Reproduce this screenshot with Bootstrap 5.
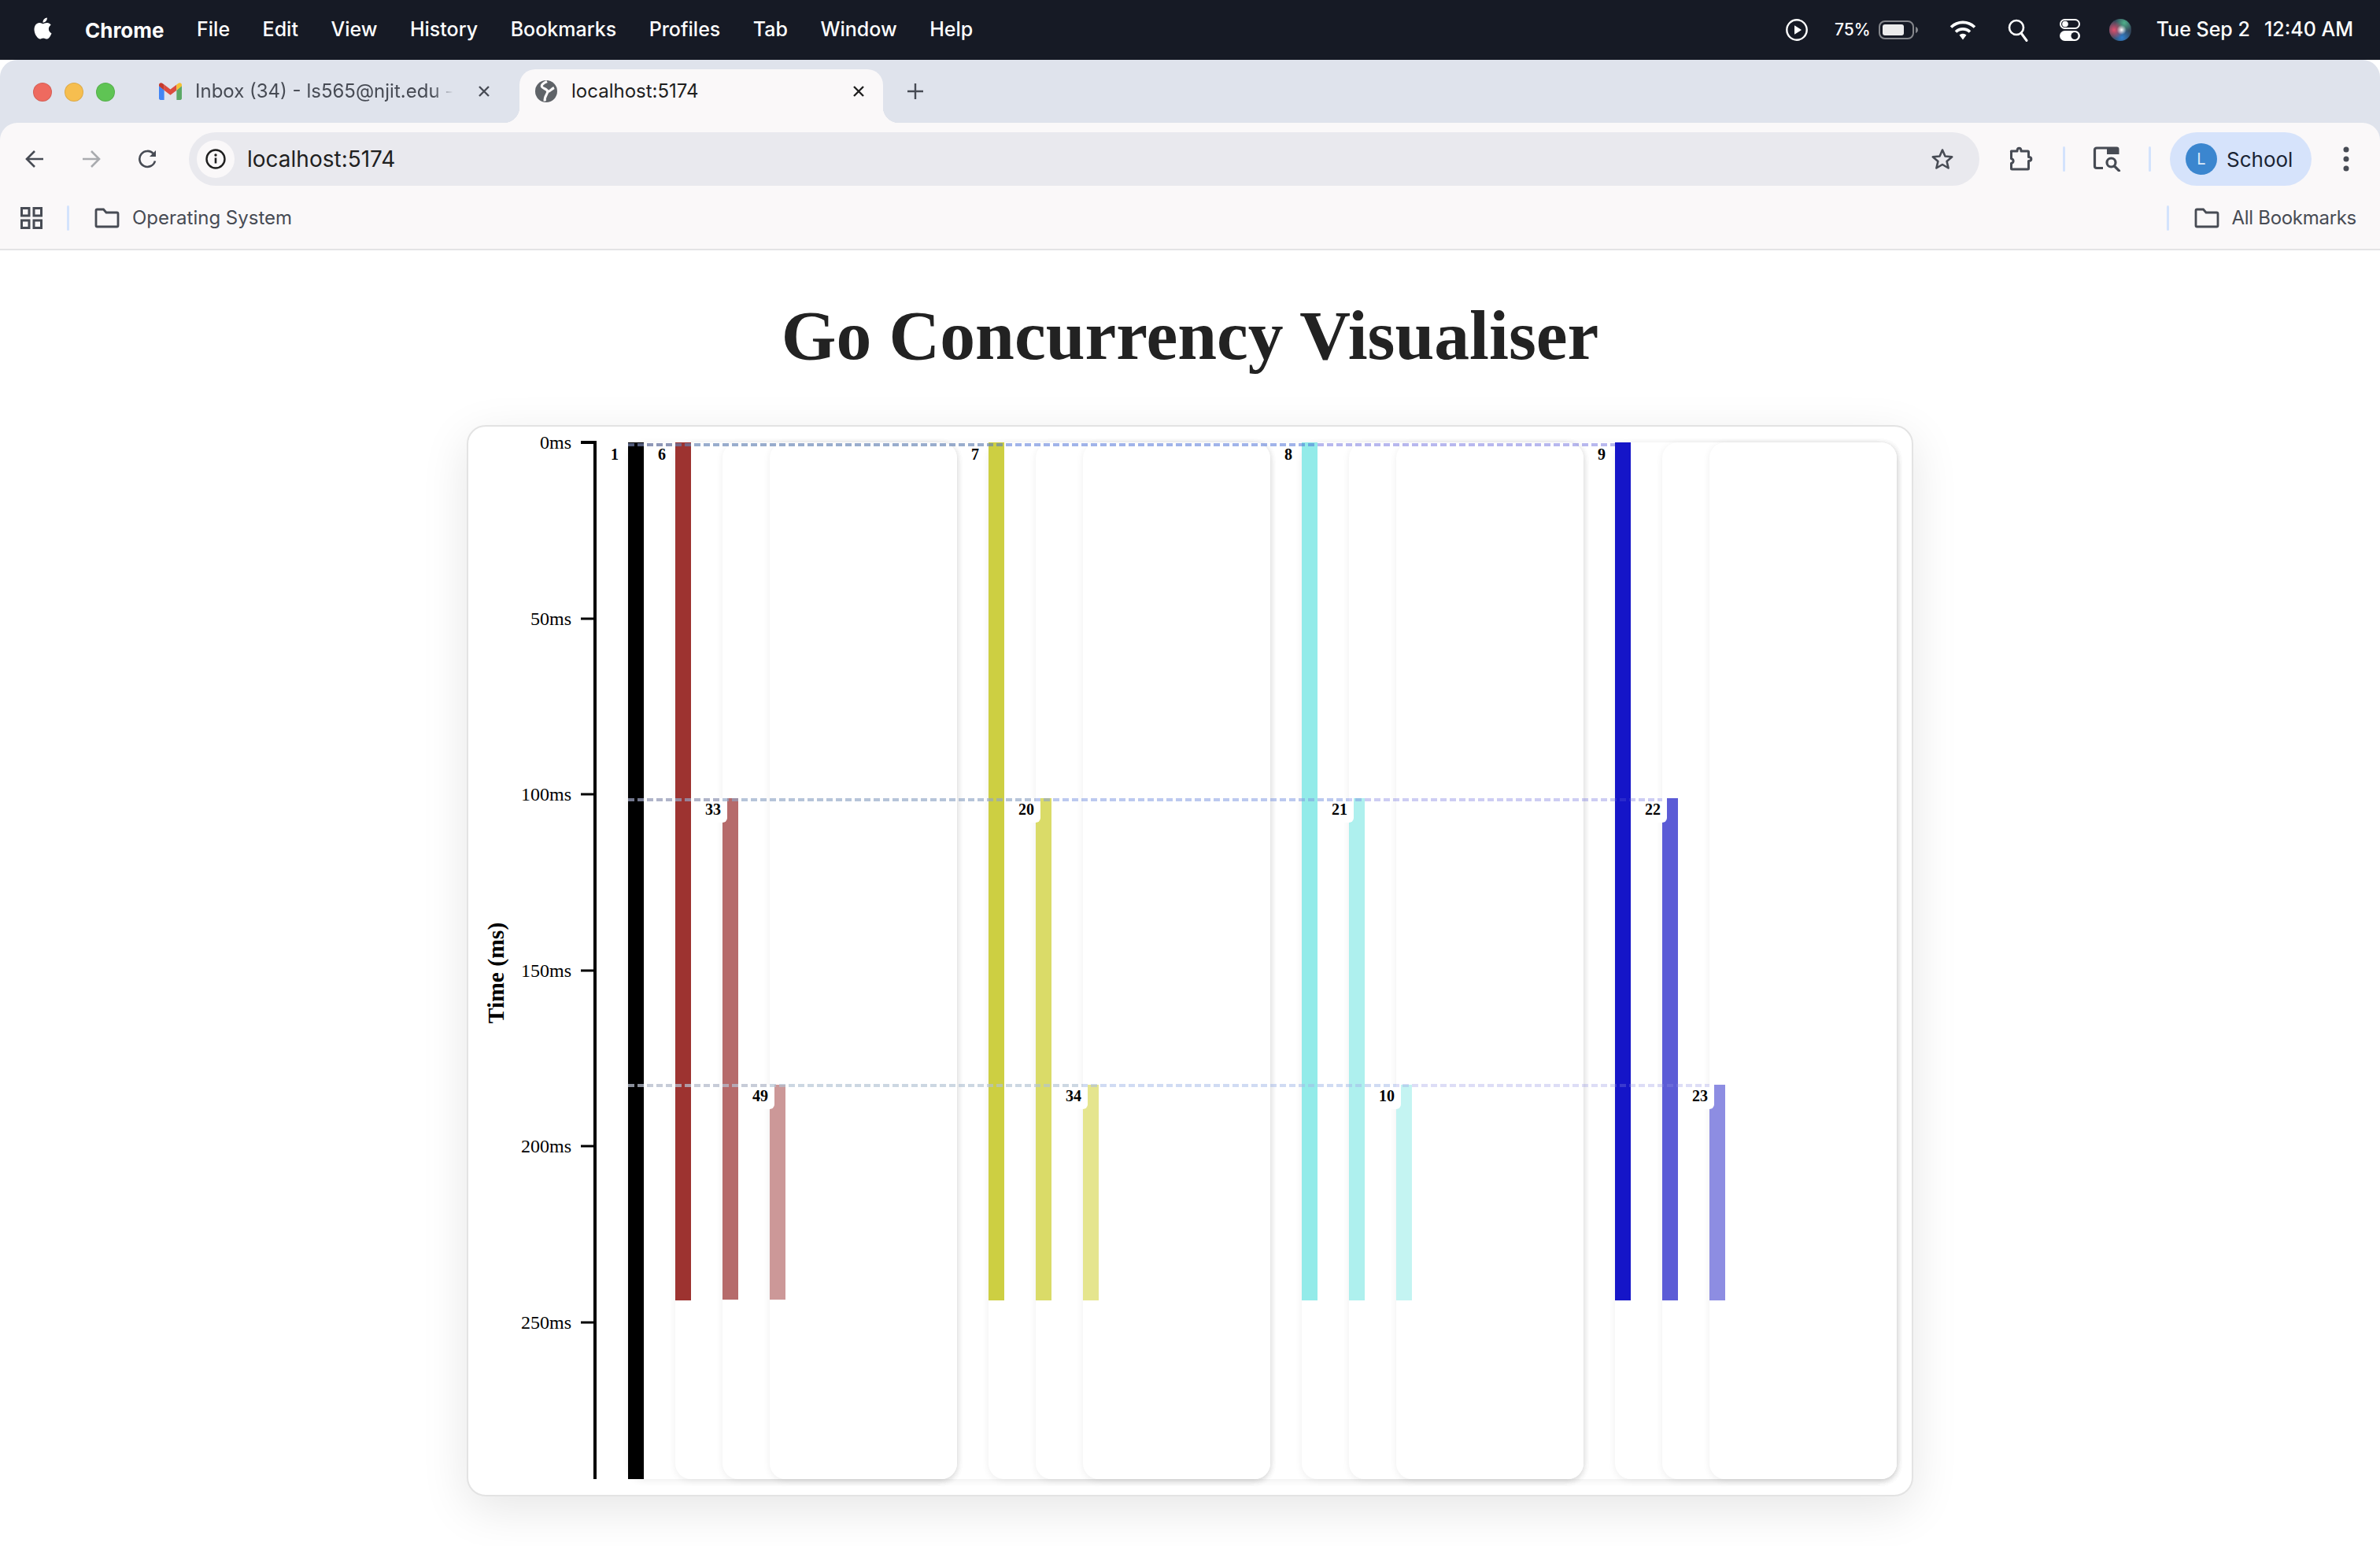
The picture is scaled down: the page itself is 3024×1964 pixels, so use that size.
<!DOCTYPE html>
<html lang="en">
  <head>
    <meta charset="utf-8" />
    <meta name="viewport" content="width=device-width, initial-scale=1" />
    <title>Go Concurrency Visualiser</title>
    <link href="https://cdn.jsdelivr.net/npm/bootstrap@5.3.0/dist/css/bootstrap.min.css" rel="stylesheet" />
    <style>
      body { background: #fff; min-height: 100vh; font-family: "Inter", "Liberation Sans", sans-serif; }

      /* mac menu bar */
      .menubar { height: 76px; background: #161a25; color: #fff; font-size: 25px; padding: 0 34px 0 41px; }
      .menu-left { gap: 41.5px; }
      .menu-apple { width: 27px; height: 32px; margin-top: -4px; fill: #fff; }
      .menu-app { font-weight: 700; font-size: 26px; margin-left: 40px; }
      .menu-item { font-weight: 500; }
      .menu-pct { font-size: 21px; font-weight: 500; margin-left: 34px; }
      .menu-batt { margin-left: 10px; }
      .menu-wifi { margin-left: 40px; }
      .menu-search { margin-left: 40px; }
      .menu-ctrl { margin-left: 40px; }
      .menu-siri { margin-left: 37px; }
      .menu-date { font-weight: 500; margin-left: 32px; }
      .menu-time { font-weight: 500; margin-left: 18px; }

      /* browser chrome */
      .tabstrip { height: 80px; background: #dfe3ec; border-radius: 22px 22px 0 0; padding: 12px 0 0 42px; }
      .light { width: 24px; height: 24px; border-radius: 50%; margin-top: 17px; margin-right: 16px; border: 1px solid rgba(0,0,0,.1); }
      .light-r { background: #ee6a5f; }
      .light-y { background: #f6be4f; }
      .light-g { background: #5fc454; margin-right: 56px; }
      .tab-off { width: 458px; height: 68px; font-size: 24px; color: #474b54; padding: 0 36px 12px 0; }
      .tab-off-text { width: 328px; margin-left: 17px; white-space: nowrap; -webkit-mask-image: linear-gradient(90deg, #000 92%, transparent); mask-image: linear-gradient(90deg, #000 92%, transparent); }
      .tab-on { width: 462px; height: 68px; background: #faf8f9; border-radius: 20px 20px 0 0; font-size: 24px; color: #1f1f1f; padding: 0 22px 12px 20px; position: relative; }
      .tab-on::before, .tab-on::after { content: ""; position: absolute; bottom: 0; width: 20px; height: 20px; background: radial-gradient(circle at 0 0, transparent 20px, #faf8f9 20.5px); }
      .tab-on::before { left: -20px; }
      .tab-on::after { right: -20px; background: radial-gradient(circle at 100% 0, transparent 20px, #faf8f9 20.5px); }
      .tab-label { margin-left: 18px; }
      .tab-new { margin-left: 30px; margin-bottom: 12px; }

      .toolbar { height: 82px; background: #faf8f9; border-radius: 22px 22px 0 0; padding: 10px 0 0 32px; }
      .tabstrip-wrap { background: #dfe3ec; }
      .tool-nav { gap: 48px; }
      .addressbar { width: 2275px; height: 68px; border-radius: 34px; background: #e9e9ee; margin-left: 40px; padding: 0 31px 0 10px; font-size: 28px; color: #1f1f1f; }
      .addr-chip { width: 48px; height: 48px; border-radius: 50%; background: #faf8f9; margin-right: 16px; }
      .tool-ext { margin-left: 37px; }
      .tool-sep { width: 3px; height: 32px; background: #d3e3fd; border-radius: 2px; }
      .tool-sep-a { margin-left: 37px; }
      .tool-search { margin-left: 35px; }
      .tool-sep-b { margin-left: 35px; }
      .profile-pill { width: 180px; height: 68px; border-radius: 34px; background: #d6e3fb; margin-left: 24px; padding-left: 20px; font-size: 26px; color: #1a2333; gap: 12px; }
      .profile-dot { width: 40px; height: 40px; border-radius: 50%; background: #3b86cf; color: #dcebfa; font-size: 20px; }
      .tool-dots { margin-left: 40px; }

      .bookmarks { height: 80px; background: #faf8f9; border-bottom: 2px solid #e3e3e5; padding: 0 30px 0 26px; font-size: 24px; color: #474b54; }
      .book-sep { width: 3px; height: 32px; background: #d3e3fd; border-radius: 2px; margin-left: 31px; margin-right: 32px; }
      .book-sep-right { margin-left: auto; margin-right: 32px; height: 32px; }
      .book-folder { margin-right: 16px; }
      .book-all { letter-spacing: -.3px; }

      /* page */
      .page-title { font-family: "Liberation Serif", serif; font-weight: 700; font-size: 89.6px; line-height: 88px; color: #222; margin: 64px 0 70px; }
      .chart-card { width: 1838px; padding: 20px; border: 2px solid #e3e3e3; border-radius: 24px; box-shadow: 0 16px 60px rgba(0,0,0,.1); }
      .axis-col { flex: none; width: 183px; height: 1317px; overflow: visible; font-family: "Liberation Serif", serif; }
      .axis-tick { font-size: 24px; }
      .axis-title { font-size: 29.6px; font-weight: 700; }

      /* goroutine lanes, nested the way the app spawns them */
      .lane { display: flex; gap: 40px; position: relative; height: 1317px; background: #fff; border-radius: 20px; box-shadow: 0 2px 10px rgba(0,0,0,.07); font-family: "Liberation Serif", serif; }
      .lane-root { flex: none; width: 1612px; }
      .lane-group { flex: 0 0 358px; }
      .lane-child { flex: 1 1 0; }
      .gbar { flex: none; width: 20px; align-self: flex-start; position: relative; }
      .gtag { position: absolute; left: -22px; top: 0; width: 28px; height: 31px; line-height: 30px; font-size: 20px; font-weight: 700; color: #000; }
      .gtag-late { background: #fff; border-radius: 0 0 6px 0; line-height: 29px; }
      .dash-layer { position: absolute; left: 0; top: 0; width: 1612px; height: 1317px; pointer-events: none; z-index: 2; }
      .dash-layer line { stroke-width: 4; stroke-dasharray: 8 4; stroke-opacity: .3; }

      .c-black { background: #000; }
      .c-red-1 { background: #9d3330; } .c-red-2 { background: #b66b6b; } .c-red-3 { background: #cc9898; }
      .c-yel-1 { background: #cdcf42; } .c-yel-2 { background: #dadb68; } .c-yel-3 { background: #e5e58e; }
      .c-cya-1 { background: #93ebe9; } .c-cya-2 { background: #aef0ee; } .c-cya-3 { background: #c4f4f2; }
      .c-blu-1 { background: #1515c8; } .c-blu-2 { background: #5b5bd6; } .c-blu-3 { background: #8d8de2; }
    </style>
  </head>
  <body>
    <!-- Menu bar -->
    <div class="menubar d-flex align-items-center">
      <div class="menu-left d-flex align-items-center">
        <div class="d-flex align-items-center">
          <svg class="menu-apple" viewBox="0 0 24 24"><path d="M12.152 6.896c-.948 0-2.415-1.078-3.96-1.04-2.04.027-3.91 1.183-4.961 3.014-2.117 3.675-.546 9.103 1.519 12.09 1.013 1.454 2.208 3.09 3.792 3.039 1.52-.065 2.09-.987 3.935-.987 1.831 0 2.35.987 3.96.948 1.637-.026 2.676-1.48 3.676-2.948 1.156-1.688 1.636-3.325 1.662-3.415-.039-.013-3.182-1.221-3.22-4.857-.026-3.04 2.48-4.494 2.597-4.559-1.429-2.09-3.623-2.324-4.39-2.376-2-.156-3.675 1.09-4.61 1.09zM15.53 3.83c.843-1.012 1.4-2.427 1.245-3.83-1.207.052-2.662.805-3.532 1.818-.78.896-1.454 2.338-1.273 3.714 1.338.104 2.715-.688 3.559-1.701"/></svg>
          <span class="menu-app">Chrome</span>
        </div>
        <span class="menu-item">File</span>
        <span class="menu-item">Edit</span>
        <span class="menu-item">View</span>
        <span class="menu-item">History</span>
        <span class="menu-item">Bookmarks</span>
        <span class="menu-item">Profiles</span>
        <span class="menu-item">Tab</span>
        <span class="menu-item">Window</span>
        <span class="menu-item">Help</span>
      </div>
      <div class="ms-auto d-flex align-items-center">
        <svg width="28" height="28" viewBox="0 0 28 28"><circle cx="14" cy="14" r="12.7" fill="none" stroke="#fff" stroke-width="2.4"/><path d="M11 8.2v11.6l9-5.8z" fill="#fff"/></svg>
        <span class="menu-pct">75%</span>
        <svg class="menu-batt" width="50" height="24" viewBox="0 0 50 24"><rect x="1" y="1" width="43" height="22" rx="7" fill="none" stroke="#85878c" stroke-width="2"/><rect x="5" y="5" width="27" height="14" rx="3" fill="#ececec"/><path d="M47 8c1.6.6 3 2 3 4s-1.4 3.4-3 4z" fill="#85878c"/></svg>
        <svg class="menu-wifi" width="34" height="26" viewBox="0 0 34 26"><g fill="none" stroke="#fff" stroke-width="3.6"><path d="M2 9.5a21.500 21.500 0 0 1 30 0"/><path d="M8 15.500a13 13 0 0 1 18 0"/></g><path d="M12.500 19.500a6.500 6.500 0 0 1 9 0L17 25.500z" fill="#fff"/></svg>
        <svg class="menu-search" width="26" height="29" viewBox="0 0 26 29"><circle cx="11" cy="11" r="9" fill="none" stroke="#fff" stroke-width="2.600"/><path d="M17 18l7 9.500" stroke="#fff" stroke-width="3" stroke-linecap="round"/></svg>
        <svg class="menu-ctrl" width="26" height="28" viewBox="0 0 26 28"><rect x="1" y="1" width="24" height="11" rx="5.500" fill="none" stroke="#fff" stroke-width="2"/><circle cx="7" cy="6.500" r="3.800" fill="#fff"/><rect y="15" width="26" height="13" rx="6.500" fill="#fff"/><circle cx="19" cy="21.500" r="4.500" fill="#161a25"/></svg>
        <svg class="menu-siri" width="28" height="28" viewBox="0 0 28 28">
          <defs>
            <radialGradient id="siriPink" cx="22%" cy="50%" r="42%"><stop offset="0" stop-color="#e0506f"/><stop offset="1" stop-color="#e0506f" stop-opacity="0"/></radialGradient>
            <radialGradient id="siriGreen" cx="68%" cy="18%" r="42%"><stop offset="0" stop-color="#4fb08a"/><stop offset="1" stop-color="#4fb08a" stop-opacity="0"/></radialGradient>
            <radialGradient id="siriBlue" cx="58%" cy="85%" r="45%"><stop offset="0" stop-color="#2f7fd0"/><stop offset="1" stop-color="#2f7fd0" stop-opacity="0"/></radialGradient>
            <radialGradient id="siriCore" cx="56%" cy="50%" r="22%"><stop offset="0" stop-color="#fff"/><stop offset="1" stop-color="#fff" stop-opacity="0"/></radialGradient>
          </defs>
          <circle cx="14" cy="14" r="14" fill="#33475a"/>
          <circle cx="14" cy="14" r="14" fill="url(#siriGreen)"/>
          <circle cx="14" cy="14" r="14" fill="url(#siriBlue)"/>
          <circle cx="14" cy="14" r="14" fill="url(#siriPink)"/>
          <circle cx="14" cy="14" r="14" fill="url(#siriCore)"/>
        </svg>
        <span class="menu-date">Tue Sep 2</span>
        <span class="menu-time">12:40 AM</span>
      </div>
    </div>

    <!-- Tabs -->
    <div class="tabstrip d-flex align-items-start">
      <span class="light light-r"></span>
      <span class="light light-y"></span>
      <span class="light light-g"></span>
      <div class="tab-off d-flex align-items-center">
        <svg width="29" height="22" viewBox="0 0 24 18"><path d="M0 3v13.500C0 17.300.7 18 1.500 18H5.500V8z" fill="#4285f4"/><path d="M24 3v13.500c0 .8-.7 1.500-1.500 1.500H18.500V8z" fill="#5ba866"/><path d="M5.500 8 12 13l6.500-5V2L12 7 5.500 2z" fill="#db4c3f"/><path d="M0 3.500 5.500 8V2L3.500.6C2-.5 0 .5 0 2.300z" fill="#c5392c"/><path d="M18.500 2v6L24 3.500V2.300c0-1.800-2-2.800-3.500-1.700z" fill="#f5c033"/></svg>
        <span class="tab-off-text">Inbox (34) - ls565@njit.edu -</span>
        <svg class="ms-auto" width="18" height="18" viewBox="0 0 18 18"><path d="M3 3l12 12M15 3 3 15" stroke="#474b54" stroke-width="2.400"/></svg>
      </div>
      <div class="tab-on d-flex align-items-center">
        <svg width="28" height="28" viewBox="0 0 28 28"><circle cx="14" cy="14" r="14" fill="#5f6368"/><g fill="none" stroke="#faf8f9" stroke-width="3.200"><path d="M15 1.500C12 3 8 4.500 8.300 7.500 8.500 10.500 15 10.500 15.700 14c.6 3.500-4.500 6-3.400 12.500"/><path d="M16 14.500c3-.2 4.500-3.500 8-5"/></g></svg>
        <span class="tab-label">localhost:5174</span>
        <svg class="ms-auto" width="18" height="18" viewBox="0 0 18 18"><path d="M3 3l12 12M15 3 3 15" stroke="#1f1f1f" stroke-width="2.400"/></svg>
      </div>
      <svg class="tab-new align-self-center" width="22" height="22" viewBox="0 0 22 22"><path d="M11 1v20M1 11h20" stroke="#474b54" stroke-width="2.400"/></svg>
    </div>

    <!-- Address bar -->
    <div class="tabstrip-wrap">
      <div class="toolbar d-flex align-items-center">
        <div class="tool-nav d-flex align-items-center">
          <svg width="24" height="24" viewBox="0 0 24 24"><path d="M23 12H3M12 2 2 12l10 10" fill="none" stroke="#474b54" stroke-width="2.600"/></svg>
          <svg width="24" height="24" viewBox="0 0 24 24"><path d="M1 12h20M12 2l10 10-10 10" fill="none" stroke="#a9abaf" stroke-width="2.600"/></svg>
          <svg width="24" height="24" viewBox="0 0 24 24"><path d="M21 14.500A10 10 0 1 1 19 5.500" fill="none" stroke="#474b54" stroke-width="2.600"/><path d="M22 1v8h-8z" fill="#474b54"/></svg>
        </div>
        <div class="addressbar d-flex align-items-center">
          <span class="addr-chip d-flex align-items-center justify-content-center">
            <svg width="26" height="26" viewBox="0 0 26 26"><circle cx="13" cy="13" r="11.500" fill="none" stroke="#1f1f1f" stroke-width="2.400"/><path d="M13 11.500v7" stroke="#1f1f1f" stroke-width="2.600"/><circle cx="13" cy="8" r="1.700" fill="#1f1f1f"/></svg>
          </span>
          <span>localhost:5174</span>
          <svg class="ms-auto" width="32" height="32" viewBox="0 0 32 32"><path d="M16 4.500l3.500 8 8.700.8-6.600 5.700 2 8.500-7.600-4.500-7.600 4.500 2-8.500-6.600-5.700 8.700-.8z" fill="none" stroke="#474b54" stroke-width="2.600" stroke-linejoin="round"/></svg>
        </div>
        <svg class="tool-ext" width="32" height="32" viewBox="0 0 32 32"><path d="M3.500 6H11c0-5 5-5 5 0h8.500a1 1 0 0 1 1 1v6.500c4.500 0 4.500 5 0 5V28a1 1 0 0 1-1 1h-20a1 1 0 0 1-1-1v-6.500c3.500-1 3.500-5 0-6V7a1 1 0 0 1 0-1z" fill="none" stroke="#474b54" stroke-width="3" stroke-linejoin="round"/></svg>
        <span class="tool-sep tool-sep-a"></span>
        <svg class="tool-search" width="36" height="32" viewBox="0 0 36 32"><path d="M13 27.500H5a2.500 2.500 0 0 1-2.500-2.500V4.500A2.500 2.500 0 0 1 5 2h13" fill="none" stroke="#474b54" stroke-width="3.200"/><path d="M18 .5h12.500a3 3 0 0 1 3 3V10H18z" fill="#474b54"/><circle cx="23.500" cy="20.500" r="5.500" fill="none" stroke="#474b54" stroke-width="3.200"/><path d="M27.500 25l6 6" stroke="#474b54" stroke-width="3.200" stroke-linecap="round"/></svg>
        <span class="tool-sep tool-sep-b"></span>
        <div class="profile-pill d-flex align-items-center">
          <span class="profile-dot d-flex align-items-center justify-content-center">L</span>
          <span>School</span>
        </div>
        <svg class="tool-dots" width="8" height="32" viewBox="0 0 8 32"><circle cx="4" cy="4" r="3.500" fill="#474b54"/><circle cx="4" cy="16" r="3.500" fill="#474b54"/><circle cx="4" cy="28" r="3.500" fill="#474b54"/></svg>
      </div>
    </div>

    <!-- Bookmarks -->
    <div class="bookmarks d-flex align-items-center">
      <svg width="28" height="28" viewBox="0 0 28 28"><g fill="none" stroke="#474b54" stroke-width="3"><rect x="1.500" y="1.500" width="9.500" height="9.500"/><rect x="17" y="1.500" width="9.500" height="9.500"/><rect x="1.500" y="17" width="9.500" height="9.500"/><rect x="17" y="17" width="9.500" height="9.500"/></g></svg>
      <span class="book-sep"></span>
      <svg class="book-folder" width="32" height="26" viewBox="0 0 32 26"><path d="M2 3.500C2 2.500 2.500 2 3.500 2h8l3.500 4h13.500c1 0 1.500.5 1.500 1.500v15c0 1-.5 1.500-1.500 1.500h-25C2.500 24 2 23.500 2 22.500z" fill="none" stroke="#474b54" stroke-width="2.800"/></svg>
      <span>Operating System</span>
      <span class="book-sep book-sep-right"></span>
      <svg class="book-folder" width="32" height="26" viewBox="0 0 32 26"><path d="M2 3.500C2 2.500 2.500 2 3.500 2h8l3.500 4h13.500c1 0 1.500.5 1.500 1.500v15c0 1-.5 1.500-1.500 1.500h-25C2.500 24 2 23.500 2 22.500z" fill="none" stroke="#474b54" stroke-width="2.800"/></svg>
      <span class="book-all">All Bookmarks</span>
    </div>

    <!-- Page -->
    <h1 class="page-title text-center">Go Concurrency Visualiser</h1>

    <div class="card chart-card mx-auto d-flex flex-row">
      <svg class="axis-col" viewBox="0 0 183 1317">
        <text class="axis-title" text-anchor="middle" transform="translate(25 674) rotate(-90)">Time (ms)</text>
        <path d="M123 0H141V1317" fill="none" stroke="#000" stroke-width="4"/>
        <path d="M123 224H141M123 447H141M123 671H141M123 894H141M123 1118H141" stroke="#000" stroke-width="3"/>
        <g class="axis-tick" text-anchor="end">
          <text x="111" y="8">0ms</text>
          <text x="111" y="232">50ms</text>
          <text x="111" y="455">100ms</text>
          <text x="111" y="679">150ms</text>
          <text x="111" y="902">200ms</text>
          <text x="111" y="1126">250ms</text>
        </g>
      </svg>

      <div class="lane lane-root">
        <div class="gbar c-black" style="height: 1317px"><span class="gtag">1</span></div>

        <div class="lane lane-group">
          <div class="gbar c-red-1" style="height: 1090px"><span class="gtag">6</span></div>
          <div class="lane lane-child">
            <div class="gbar c-red-2" style="margin-top: 452px; height: 637px"><span class="gtag gtag-late">33</span></div>
            <div class="lane lane-child">
              <div class="gbar c-red-3" style="margin-top: 816px; height: 273px"><span class="gtag gtag-late">49</span></div>
            </div>
          </div>
        </div>

        <div class="lane lane-group">
          <div class="gbar c-yel-1" style="height: 1090px"><span class="gtag">7</span></div>
          <div class="lane lane-child">
            <div class="gbar c-yel-2" style="margin-top: 452px; height: 638px"><span class="gtag gtag-late">20</span></div>
            <div class="lane lane-child">
              <div class="gbar c-yel-3" style="margin-top: 816px; height: 274px"><span class="gtag gtag-late">34</span></div>
            </div>
          </div>
        </div>

        <div class="lane lane-group">
          <div class="gbar c-cya-1" style="height: 1090px"><span class="gtag">8</span></div>
          <div class="lane lane-child">
            <div class="gbar c-cya-2" style="margin-top: 452px; height: 638px"><span class="gtag gtag-late">21</span></div>
            <div class="lane lane-child">
              <div class="gbar c-cya-3" style="margin-top: 816px; height: 274px"><span class="gtag gtag-late">10</span></div>
            </div>
          </div>
        </div>

        <div class="lane lane-group">
          <div class="gbar c-blu-1" style="height: 1090px"><span class="gtag">9</span></div>
          <div class="lane lane-child">
            <div class="gbar c-blu-2" style="margin-top: 452px; height: 638px"><span class="gtag gtag-late">22</span></div>
            <div class="lane lane-child">
              <div class="gbar c-blu-3" style="margin-top: 816px; height: 274px"><span class="gtag gtag-late">23</span></div>
            </div>
          </div>
        </div>

        <!-- spawn lines, drawn over the lanes -->
        <svg class="dash-layer" viewBox="0 0 1612 1317">
          <line x1="0" y1="3" x2="60" y2="3" stroke="#9d3330"/>
          <line x1="0" y1="3" x2="458" y2="3" stroke="#cdcf42"/>
          <line x1="0" y1="3" x2="856" y2="3" stroke="#93ebe9"/>
          <line x1="0" y1="3" x2="1254" y2="3" stroke="#1515c8"/>

          <line x1="0" y1="454" x2="120" y2="454" stroke="#b66b6b"/>
          <line x1="0" y1="454" x2="518" y2="454" stroke="#dadb68"/>
          <line x1="0" y1="454" x2="916" y2="454" stroke="#aef0ee"/>
          <line x1="0" y1="454" x2="1314" y2="454" stroke="#5b5bd6"/>

          <line x1="0" y1="817" x2="180" y2="817" stroke="#cc9898"/>
          <line x1="0" y1="817" x2="578" y2="817" stroke="#e5e58e"/>
          <line x1="0" y1="817" x2="976" y2="817" stroke="#c4f4f2"/>
          <line x1="0" y1="817" x2="1374" y2="817" stroke="#8d8de2"/>
        </svg>
      </div>
    </div>

    <script src="https://cdn.jsdelivr.net/npm/bootstrap@5.3.0/dist/js/bootstrap.bundle.min.js"></script>
  </body>
</html>
